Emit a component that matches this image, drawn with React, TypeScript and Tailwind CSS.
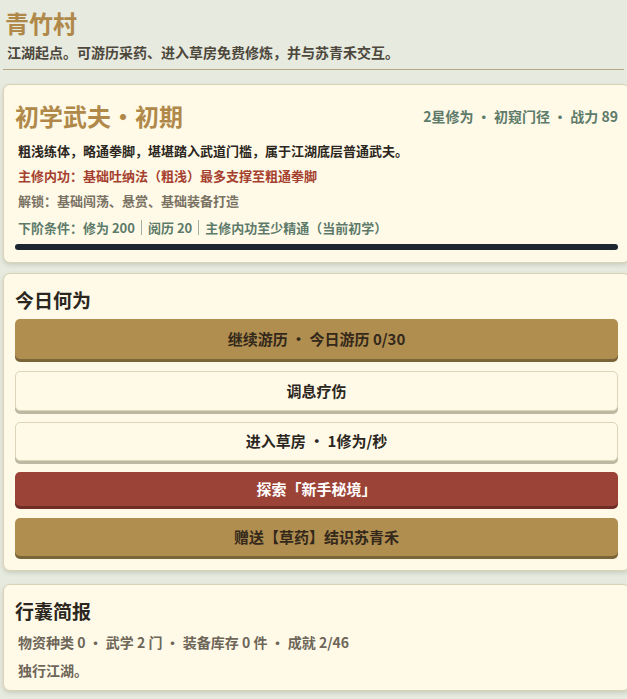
import React from 'react';

const font = { fontFamily: '"Noto Sans CJK SC", "Noto Sans", sans-serif' };

const Card: React.FC<{ className?: string; children: React.ReactNode }> = ({ className = '', children }) => (
    <div className={`w-[627px] bg-[#fffae8] border border-[#d9d2b4] rounded-[7px] shadow-[0_2px_4px_rgba(80,80,60,0.18)] px-[11px] ${className}`}>
        {children}
    </div>
);

type Variant = 'gold' | 'light' | 'red';

const ActionButton: React.FC<{ variant: Variant; h: string; children: React.ReactNode }> = ({ variant, h, children }) => {
    const styles: Record<Variant, string> = {
        gold: 'bg-[#b08e50] text-[#33281a] shadow-[0_3px_0_#7a6538]',
        light: 'bg-[#fffae8] text-[#2b2620] border border-[#ddd5b6] shadow-[0_3px_0_#bdb8a4]',
        red: 'bg-[#9c4337] text-white shadow-[0_3px_0_#6e2e25]',
    };
    return (
        <button className={`w-full ${h} rounded-[5px] flex items-center justify-center text-[15px] font-bold ${styles[variant]}`}>
            {children}
        </button>
    );
};

export default function App() {
    return (
        <div style={font} className="min-h-screen w-full overflow-hidden bg-[#e6eadf] px-[3px]">
            <div className="pt-[6px] pb-[7px] border-b border-[#b5a785]">
                <h1 className="text-[24px] leading-[34px] font-bold text-[#b0894a] pl-[2px]">青竹村</h1>
                <p className="mt-[2px] text-[14px] leading-[20px] font-bold text-[#4d473c] pl-[4px]">
                    江湖起点。可游历采药、进入草房免费修炼，并与苏青禾交互。
                </p>
            </div>

            <Card className="mt-[14px] pt-[15px] pb-[12px]">
                <div className="h-[32px] flex items-center justify-between">
                    <h2 className="text-[24px] font-bold text-[#b0894a]">初学武夫・初期</h2>
                    <span className="text-[14px] font-bold text-[#5d7a6a]">2星修为 ・ 初窥门径 ・ 战力 89</span>
                </div>
                <div className="pl-[3px]">
                    <div className="mt-[6px] h-[25px] flex items-center text-[13px] font-bold text-[#2b2620]">
                        粗浅练体，略通拳脚，堪堪踏入武道门槛，属于江湖底层普通武夫。
                    </div>
                    <div className="h-[25px] flex items-center text-[13px] font-bold text-[#a5402f]">
                        主修内功：基础吐纳法（粗浅）最多支撑至粗通拳脚
                    </div>
                    <div className="h-[25px] flex items-center text-[13px] font-bold text-[#7a7263]">
                        解锁：基础闯荡、悬赏、基础装备打造
                    </div>
                    <div className="mt-[2px] h-[25px] flex items-center text-[13px] font-bold text-[#5d7a6a]">
                        <span>下阶条件：修为 200</span>
                        <span className="mx-[6px] h-[15px] w-px bg-[#a3b0a6]" />
                        <span>阅历 20</span>
                        <span className="mx-[6px] h-[15px] w-px bg-[#a3b0a6]" />
                        <span>主修内功至少精通（当前初学）</span>
                    </div>
                </div>
                <div className="mt-[4px] h-[6px] rounded-full bg-[#1b2631]" />
            </Card>

            <Card className="mt-[10px] pt-[13px] pb-[11px]">
                <h3 className="h-[27px] flex items-center text-[19px] font-bold text-[#2b2620]">今日何为</h3>
                <div className="mt-[5px] flex flex-col">
                    <ActionButton variant="gold" h="h-[40px]">继续游历 ・ 今日游历 0/30</ActionButton>
                    <div className="h-[12px]" />
                    <ActionButton variant="light" h="h-[40px]">调息疗伤</ActionButton>
                    <div className="h-[11px]" />
                    <ActionButton variant="light" h="h-[39px]">进入草房 ・ 1修为/秒</ActionButton>
                    <div className="h-[11px]" />
                    <ActionButton variant="red" h="h-[34px]">探索「新手秘境」</ActionButton>
                    <div className="h-[12px]" />
                    <ActionButton variant="gold" h="h-[38px]">赠送【草药】结识苏青禾</ActionButton>
                </div>
                <div className="h-[3px]" />
            </Card>

            <Card className="mt-[13px] pt-[13px] pb-[6px] mb-4">
                <h3 className="h-[27px] flex items-center text-[19px] font-bold text-[#2b2620]">行囊简报</h3>
                <div className="mt-[3px] h-[28px] flex items-center text-[14px] font-bold text-[#6e6658] pl-[3px]">
                    物资种类 0 ・ 武学 2 门 ・ 装备库存 0 件 ・ 成就 2/46
                </div>
                <div className="h-[28px] flex items-center text-[14px] font-bold text-[#6e6658] pl-[3px]">
                    独行江湖。
                </div>
            </Card>
        </div>
    );
}
